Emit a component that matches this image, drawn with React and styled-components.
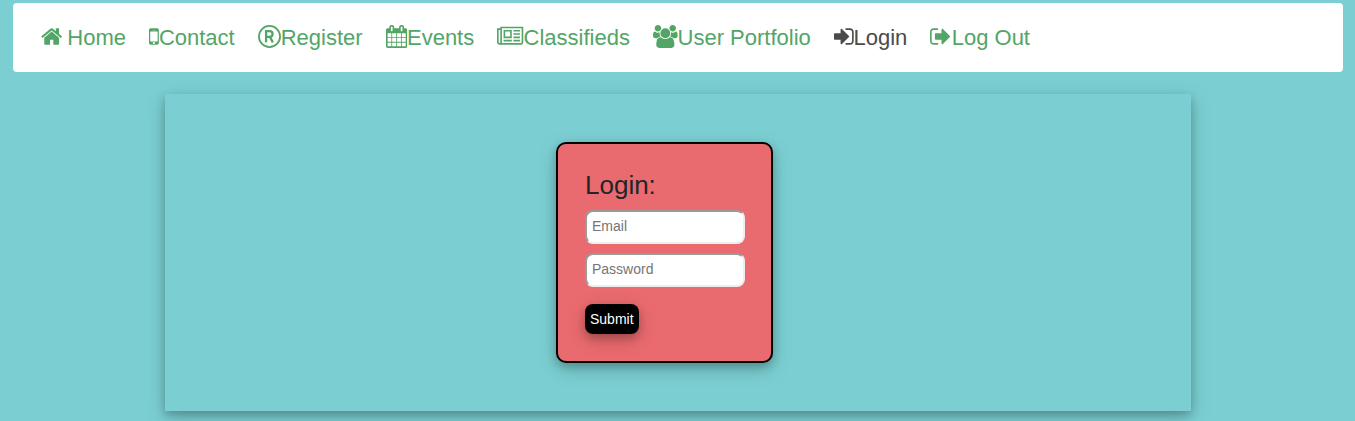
import React from "react";
import styled, { createGlobalStyle } from "styled-components";

const GlobalStyle = createGlobalStyle`
  *, *::before, *::after { box-sizing: border-box; }
  body {
    margin: 0;
    background: #7bcfd2;
    color: #212529;
    font-family: "Liberation Sans", Arial, Helvetica, sans-serif;
    font-size: 16px;
  }
`;

const Page = styled.div`
  padding: 3px 12px 10px 13px;
`;

const NavBar = styled.nav`
  background: #fff;
  border-radius: 4px;
  padding: 20px 28px 19px;
  margin-bottom: 22px;
`;

const NavList = styled.ul`
  display: flex;
  flex-wrap: wrap;
  column-gap: 23px;
  margin: 0;
  padding: 0;
  list-style: none;
`;

const NavLink = styled.a`
  display: flex;
  align-items: center;
  gap: ${({ $spaced }) => ($spaced ? "5px" : "0")};
  color: ${({ $active }) => ($active ? "#4b4b4b" : "#53a567")};
  font-size: 22px;
  line-height: 30px;
  text-decoration: none;
  white-space: nowrap;
`;

const IconSvg = styled.svg`
  display: block;
  flex: none;
  height: 23px;
  width: auto;
  margin-bottom: 3px;
  fill: currentColor;
`;

const Panel = styled.main`
  display: flex;
  justify-content: center;
  max-width: 1026px;
  margin: 0 auto;
  padding: 48px 27px 48px 0;
  box-shadow: 0 4px 8px rgba(0, 0, 0, 0.2), 0 6px 20px rgba(0, 0, 0, 0.19);
`;

const Card = styled.form`
  display: flex;
  flex-direction: column;
  align-items: flex-start;
  padding: 26px 26px 27px 27px;
  border: 2px solid #000;
  border-radius: 10px;
  background: #ea6b6f;
  box-shadow: 0 4px 8px rgba(0, 0, 0, 0.2), 0 6px 20px rgba(0, 0, 0, 0.19);
`;

const Title = styled.h1`
  margin: 0 0 10px;
  font-size: 26px;
  font-weight: 400;
  line-height: 30px;
`;

const Field = styled.input`
  width: 160px;
  height: 34px;
  margin-bottom: 9px;
  padding: 0 5px 2px;
  border: 2px solid;
  border-color: #9a9a9a #eeeeee #eeeeee #9a9a9a;
  border-radius: 8px;
  background: #fff;
  font-family: inherit;
  font-size: 14px;

  &::placeholder { color: #757575; opacity: 1; }
`;

const SubmitButton = styled.button`
  height: 30px;
  margin-top: 8px;
  padding: 0 5px;
  border: 0;
  border-radius: 8px;
  background: #000;
  color: #fff;
  font-family: inherit;
  font-size: 14px;
  box-shadow: 0 4px 8px rgba(0, 0, 0, 0.2), 0 6px 20px rgba(0, 0, 0, 0.19);
`;

const icons = {
  home: {
    box: "64 0 1664 1792",
    d: "M1472 992v480q0 26-19 45t-45 19h-384v-384h-256v384h-384q-26 0-45-19t-19-45v-480q0-1 .5-3t.5-3l575-474 575 474q1 2 1 6zm223-69l-62 74q-8 9-21 11h-3q-13 0-21-7l-692-577-692 577q-12 8-24 7-13-2-21-11l-62-74q-8-10-7-23.5t11-21.5l719-599q32-26 76-26t76 26l244 204v-195q0-14 9-23t23-9h192q14 0 23 9t9 23v408l219 182q10 8 11 21.5t-7 23.5z",
  },
  mobile: {
    box: "512 0 768 1792",
    d: "M976 1408q0-33-23.5-56.5t-56.5-23.5-56.5 23.5-23.5 56.5 23.5 56.5 56.5 23.5 56.5-23.5 23.5-56.5zm208-160v-704q0-13-9.5-22.5t-22.5-9.5h-512q-13 0-22.5 9.5t-9.5 22.5v704q0 13 9.5 22.5t22.5 9.5h512q13 0 22.5-9.5t9.5-22.5zm-192-848q0-16-16-16h-160q-16 0-16 16t16 16h160q16 0 16-16zm288-16v1024q0 52-38 90t-90 38h-512q-52 0-90-38t-38-90v-1024q0-52 38-90t90-38h512q52 0 90 38t38 90z",
  },
  calendar: {
    box: "64 0 1664 1792",
    d: "M192 1664h288v-288h-288v288zm352 0h320v-288h-320v288zm-352-352h288v-320h-288v320zm352 0h320v-320h-320v320zm-352-384h288v-288h-288v288zm736 736h320v-288h-320v288zm-384-736h320v-288h-320v288zm768 736h288v-288h-288v288zm-384-352h320v-320h-320v320zm-352-864v-288q0-13-9.5-22.5t-22.5-9.5h-64q-13 0-22.5 9.5t-9.5 22.5v288q0 13 9.5 22.5t22.5 9.5h64q13 0 22.5-9.5t9.5-22.5zm736 864h288v-320h-288v320zm-384-384h320v-288h-320v288zm384 0h288v-288h-288v288zm32-480v-288q0-13-9.5-22.5t-22.5-9.5h-64q-13 0-22.5 9.5t-9.5 22.5v288q0 13 9.5 22.5t22.5 9.5h64q13 0 22.5-9.5t9.5-22.5zm384-64v1280q0 52-38 90t-90 38h-1408q-52 0-90-38t-38-90v-1280q0-52 38-90t90-38h128v-96q0-66 47-113t113-47h64q66 0 113 47t47 113v96h384v-96q0-66 47-113t113-47h64q66 0 113 47t47 113v96h128q52 0 90 38t38 90z",
  },
  newspaper: {
    box: "0 0 2048 1792",
    d: "M1024 512h-384v384h384v-384zm128 640v128h-640v-128h640zm0-768v640h-640v-640h640zm640 768v128h-512v-128h512zm0-256v128h-512v-128h512zm0-256v128h-512v-128h512zm0-256v128h-512v-128h512zm-1536 960v-960h-128v960q0 26 19 45t45 19 45-19 19-45zm1664 0v-1088h-1536v1088q0 33-11 64h1483q26 0 45-19t19-45zm128-1216v1216q0 80-56 136t-136 56h-1664q-80 0-136-56t-56-136v-1088h256v-128h1792z",
  },
  users: {
    box: "0 0 1920 1792",
    d: "M593 896q-162 5-265 128h-134q-82 0-138-40.5t-56-118.5q0-353 124-353 6 0 43.5 21t97.5 42.5 119 21.5q67 0 133-23-5 37-5 66 0 139 81 256zm1071 637q0 120-73 189.5t-194 69.5h-874q-121 0-194-69.5t-73-189.5q0-53 3.5-103.5t14-109 26.5-108.5 43-97.5 62-81 85.5-53.5 111.5-20q10 0 43 21.5t73 48 107 48 135 21.5 135-21.5 107-48 73-48 43-21.5q61 0 111.5 20t85.5 53.5 62 81 43 97.5 26.5 108.5 14 109 3.5 103.5zm-1024-1277q0 106-75 181t-181 75-181-75-75-181 75-181 181-75 181 75 75 181zm704 384q0 159-112.5 271.5t-271.5 112.5-271.5-112.5-112.5-271.5 112.5-271.5 271.5-112.5 271.5 112.5 112.5 271.5zm576 225q0 78-56 118.5t-138 40.5h-134q-103-123-265-128 81-117 81-256 0-29-5-66 66 23 133 23 59 0 119-21.5t97.5-42.5 43.5-21q124 0 124 353zm-128-609q0 106-75 181t-181 75-181-75-75-181 75-181 181-75 181 75 75 181z",
  },
  signIn: {
    box: "128 0 1536 1792",
    d: "M1312 896q0 26-19 45l-544 544q-19 19-45 19t-45-19-19-45v-288h-448q-26 0-45-19t-19-45v-384q0-26 19-45t45-19h448v-288q0-26 19-45t45-19 45 19l544 544q19 19 19 45zm352-352v704q0 119-84.5 203.5t-203.5 84.5h-320q-13 0-22.5-9.5t-9.5-22.5q0-4-1-20t-.5-26.5 3-23.5 10-19.5 20.5-6.5h320q66 0 113-47t47-113v-704q0-66-47-113t-113-47h-312l-11.5-1-11.5-3-8-5.5-7-9-2-13.5q0-4-1-20t-.5-26.5 3-23.5 10-19.5 20.5-6.5h320q119 0 203.5 84.5t84.5 203.5z",
  },
  signOut: {
    box: "64 0 1664 1792",
    d: "M704 1440q0 4 1 20t.5 26.5-3 23.5-10 19.5-20.5 6.5h-320q-119 0-203.5-84.5t-84.5-203.5v-704q0-119 84.5-203.5t203.5-84.5h320q13 0 22.5 9.5t9.5 22.5q0 4 1 20t.5 26.5-3 23.5-10 19.5-20.5 6.5h-320q-66 0-113 47t-47 113v704q0 66 47 113t113 47h312l11.5 1 11.5 3 8 5.5 7 9 2 13.5zm928-544q0 26-19 45l-544 544q-19 19-45 19t-45-19-19-45v-288h-448q-26 0-45-19t-19-45v-384q0-26 19-45t45-19h448v-288q0-26 19-45t45-19 45 19l544 544q19 19 19 45z",
  },
};

function Icon({ name }) {
  if (name === "registered") {
    return (
      <IconSvg viewBox="0 0 1792 1792" aria-hidden="true">
        <g fill="none" stroke="currentColor">
          <circle cx="896" cy="896" r="822" strokeWidth="140" />
          <path
            d="M630 1350V480h280a225 225 0 0 1 0 450H630M930 930l230 420"
            strokeWidth="180"
          />
        </g>
      </IconSvg>
    );
  }
  const { box, d } = icons[name];
  return (
    <IconSvg viewBox={box} aria-hidden="true">
      <path d={d} />
    </IconSvg>
  );
}

const links = [
  { label: "Home", icon: "home", spaced: true },
  { label: "Contact", icon: "mobile" },
  { label: "Register", icon: "registered" },
  { label: "Events", icon: "calendar" },
  { label: "Classifieds", icon: "newspaper" },
  { label: "User Portfolio", icon: "users" },
  { label: "Login", icon: "signIn", active: true },
  { label: "Log Out", icon: "signOut" },
];

export default function App() {
  return (
    <>
      <GlobalStyle />
      <Page>
        <NavBar>
          <NavList>
            {links.map(({ label, icon, spaced, active }) => (
              <li key={label}>
                <NavLink
                  href="#"
                  $spaced={spaced}
                  $active={active}
                  aria-current={active ? "page" : undefined}
                >
                  <Icon name={icon} />
                  {label}
                </NavLink>
              </li>
            ))}
          </NavList>
        </NavBar>
        <Panel>
          <Card onSubmit={(event) => event.preventDefault()}>
            <Title>Login:</Title>
            <Field type="email" placeholder="Email" aria-label="Email" />
            <Field type="password" placeholder="Password" aria-label="Password" />
            <SubmitButton type="submit">Submit</SubmitButton>
          </Card>
        </Panel>
      </Page>
    </>
  );
}
